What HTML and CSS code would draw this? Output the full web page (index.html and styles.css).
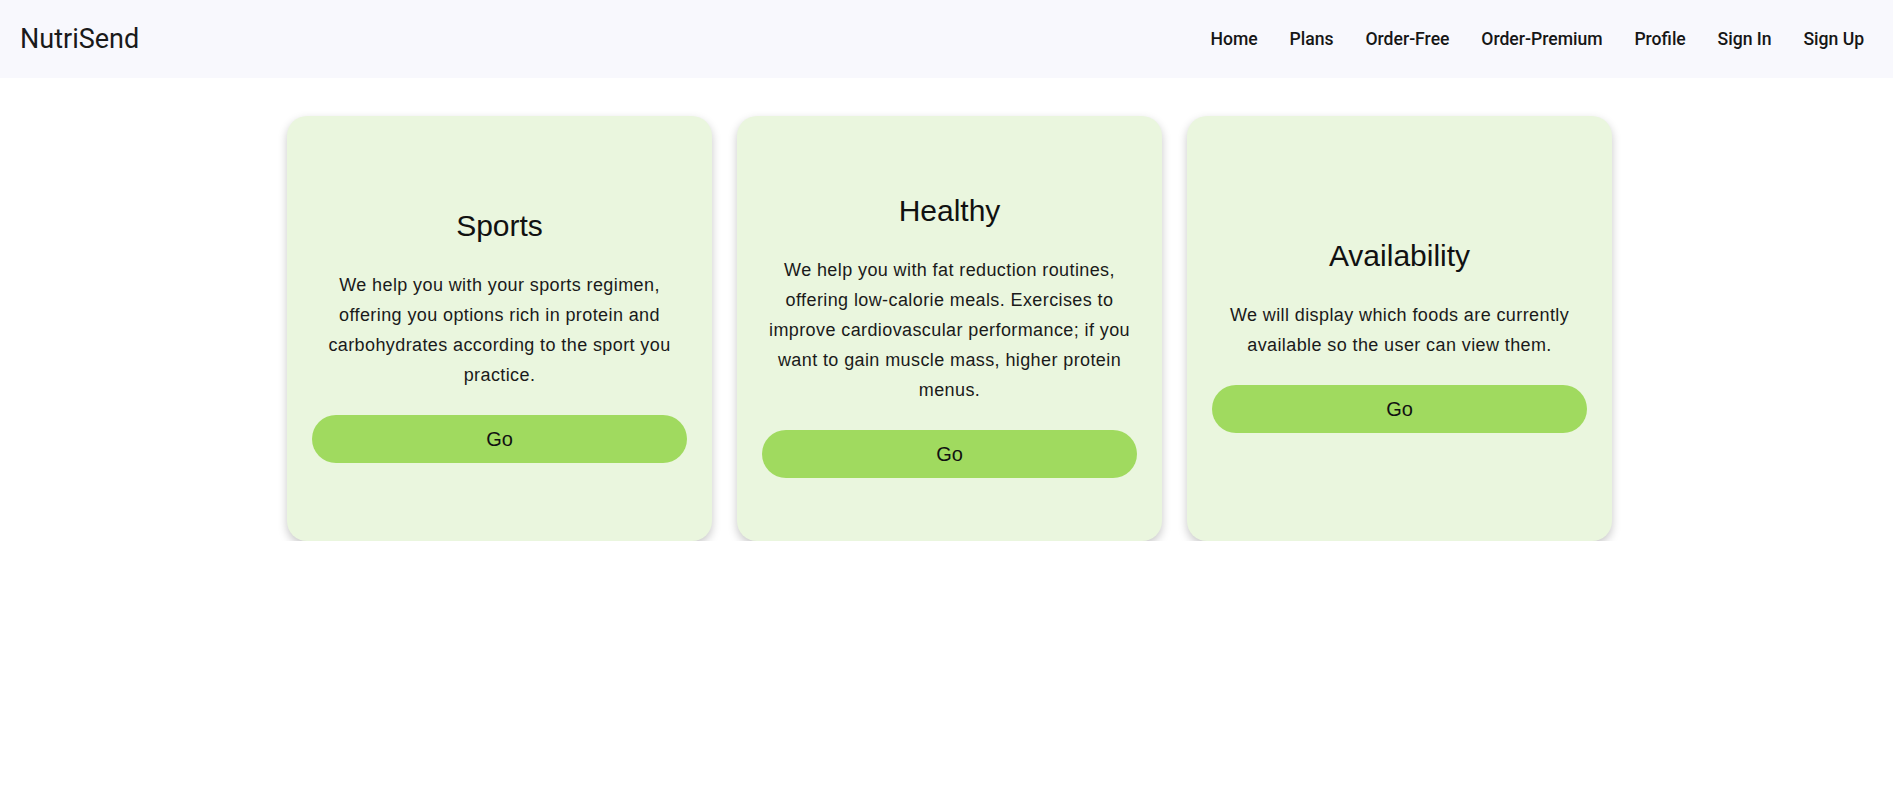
FILE: index.html
```html
<!DOCTYPE html>
<html lang="en">
<head>
<meta charset="utf-8">
<title>NutriSend</title>
<link rel="stylesheet" href="styles.css">
</head>
<body>
<header class="topbar">
  <a class="brand" href="#">NutriSend</a>
  <nav class="nav">
    <a href="#">Home</a>
    <a href="#">Plans</a>
    <a href="#">Order-Free</a>
    <a href="#">Order-Premium</a>
    <a href="#">Profile</a>
    <a href="#">Sign In</a>
    <a href="#">Sign Up</a>
  </nav>
</header>
<main class="cards">
  <section class="card">
    <h2 class="card-title">Sports</h2>
    <p class="card-text">We help you with your sports regimen, offering you options rich in protein and carbohydrates according to the sport you practice.</p>
    <button class="card-btn">Go</button>
  </section>
  <section class="card">
    <h2 class="card-title">Healthy</h2>
    <p class="card-text">We help you with fat reduction routines, offering low-calorie meals. Exercises to improve cardiovascular performance; if you want to gain muscle mass, higher protein menus.</p>
    <button class="card-btn">Go</button>
  </section>
  <section class="card">
    <h2 class="card-title">Availability</h2>
    <p class="card-text">We will display which foods are currently available so the user can view them.</p>
    <button class="card-btn">Go</button>
  </section>
</main>
</body>
</html>
```
FILE: styles.css
```css
* { box-sizing: border-box; }
body {
  margin: 0;
  background: #ffffff;
  font-family: "Liberation Sans", Arial, sans-serif;
  color: #111;
}
.topbar {
  height: 78px;
  background: #f8f8fd;
  display: flex;
  align-items: center;
  justify-content: space-between;
  padding: 0 13px 0 20px;
}
.brand {
  font-family: Roboto, "Liberation Sans", sans-serif;
  font-size: 27px;
  font-weight: 400;
  color: #1a1a1a;
  text-decoration: none;
}
.nav {
  display: flex;
  align-items: center;
}
.nav a {
  font-family: Roboto, "Liberation Sans", sans-serif;
  font-size: 17.6px;
  font-weight: 500;
  color: #161616;
  text-decoration: none;
  padding: 0 15.9px;
}
.cards {
  display: flex;
  justify-content: center;
  gap: 25px;
  padding: 38px 0 0 6px;
}
.card {
  width: 425px;
  height: 425px;
  background: #eaf6de;
  border-radius: 20px;
  box-shadow: 0 4px 10px rgba(0, 0, 0, 0.22);
  padding: 0 25px;
  display: flex;
  flex-direction: column;
  justify-content: center;
  align-items: stretch;
  text-align: center;
}
.card-title {
  font-size: 30px;
  font-weight: 400;
  line-height: 34.5px;
  margin: 15px 0 27px;
  color: #111;
}
.card-text {
  font-size: 18px;
  letter-spacing: 0.4px;
  line-height: 30px;
  margin: 0 0 25px;
  color: #1a1a1a;
}
.card-btn {
  height: 48px;
  border: none;
  border-radius: 24px;
  background: #a0da5f;
  font-family: "Liberation Sans", Arial, sans-serif;
  font-size: 20px;
  color: #111;
  cursor: pointer;
}
```
